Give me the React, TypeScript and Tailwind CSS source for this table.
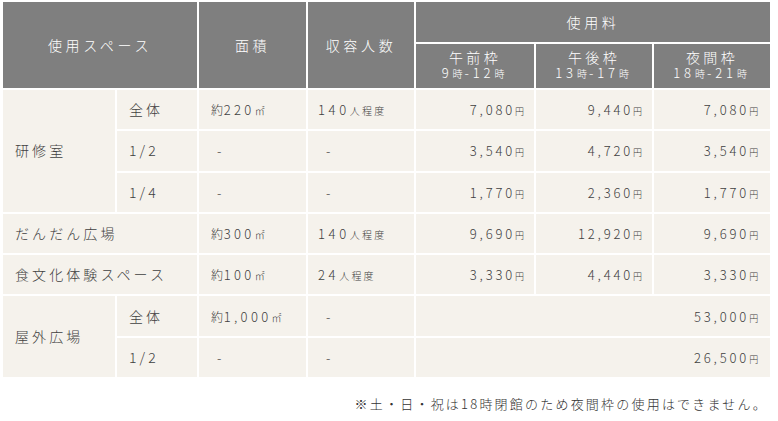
import React from "react";

const TH = "bg-[#7f7f7f] text-white font-light text-center align-middle";
const TD = "bg-[#f5f2ec] align-middle";

function Yen({ v }: { v: string }) {
  return (
    <span className="text-[13px] tracking-[0.22em]">
      {v}
      <span className="text-[9px] tracking-[0.1em]">円</span>
    </span>
  );
}

function Cap({ v }: { v: string }) {
  return (
    <span className="text-[13px] tracking-[0.28em]">
      {v}
      <span className="text-[10px] tracking-[0.22em]">人程度</span>
    </span>
  );
}

function Area({ v }: { v: string }) {
  return (
    <span className="text-[13px] tracking-[0.26em]">
      <span className="text-[12px] tracking-[0.05em]">約</span>
      {v}
      <span className="text-[10px]">㎡</span>
    </span>
  );
}

function Slot({ name, a, b }: { name: string; a: string; b: string }) {
  return (
    <div className="flex flex-col items-center pb-[2px]">
      <span className="block text-[14px] tracking-[0.24em] leading-[15px]">{name}</span>
      <span className="block text-[13px] tracking-[0.3em] leading-[15px]">
        {a}
        <span className="text-[10px] tracking-[0.2em]">時</span>-{b}
        <span className="text-[10px]">時</span>
      </span>
    </div>
  );
}

function Dash() {
  return <span className="pl-[6px] text-[13px]">-</span>;
}

export default function App() {
  const rowH = "h-[39.3px]";
  return (
    <div
      className="w-[778px] h-[421px] bg-white text-[#404040] pl-[1px] font-light"
      style={{ fontFamily: '"Noto Sans CJK JP", "Noto Sans", sans-serif' }}
    >
      <table className="table-fixed border-separate border-spacing-[2px] w-[771px] text-[14px] tracking-[0.22em]">
        <colgroup>
          <col className="w-[112px]" />
          <col className="w-[80px]" />
          <col className="w-[107px]" />
          <col className="w-[106px]" />
          <col className="w-[118px]" />
          <col className="w-[116px]" />
          <col className="w-[116px]" />
        </colgroup>
        <thead>
          <tr className="h-[40px]">
            <th rowSpan={2} colSpan={2} className={`${TH} tracking-[0.26em]`}>
              使用スペース
            </th>
            <th rowSpan={2} className={`${TH} tracking-[0.26em]`}>
              面積
            </th>
            <th rowSpan={2} className={`${TH} tracking-[0.26em]`}>
              収容人数
            </th>
            <th colSpan={3} className={`${TH} tracking-[0.26em]`}>
              使用料
            </th>
          </tr>
          <tr className="h-[44px]">
            <th className={TH}>
              <Slot name="午前枠" a="9" b="12" />
            </th>
            <th className={TH}>
              <Slot name="午後枠" a="13" b="17" />
            </th>
            <th className={TH}>
              <Slot name="夜間枠" a="18" b="21" />
            </th>
          </tr>
        </thead>
        <tbody>
          <tr className={rowH}>
            <td rowSpan={3} className={`${TD} pl-[12px]`}>
              研修室
            </td>
            <td className={`${TD} pl-[12px]`}>全体</td>
            <td className={`${TD} pl-[12px]`}>
              <Area v="220" />
            </td>
            <td className={`${TD} pl-[10px]`}>
              <Cap v="140" />
            </td>
            <td className={`${TD} text-right pr-[9px]`}>
              <Yen v="7,080" />
            </td>
            <td className={`${TD} text-right pr-[9px]`}>
              <Yen v="9,440" />
            </td>
            <td className={`${TD} text-right pr-[11px]`}>
              <Yen v="7,080" />
            </td>
          </tr>
          <tr className={rowH}>
            <td className={`${TD} pl-[12px]`}>1/2</td>
            <td className={`${TD} pl-[12px]`}>
              <Dash />
            </td>
            <td className={`${TD} pl-[12px]`}>
              <Dash />
            </td>
            <td className={`${TD} text-right pr-[9px]`}>
              <Yen v="3,540" />
            </td>
            <td className={`${TD} text-right pr-[9px]`}>
              <Yen v="4,720" />
            </td>
            <td className={`${TD} text-right pr-[11px]`}>
              <Yen v="3,540" />
            </td>
          </tr>
          <tr className={rowH}>
            <td className={`${TD} pl-[12px]`}>1/4</td>
            <td className={`${TD} pl-[12px]`}>
              <Dash />
            </td>
            <td className={`${TD} pl-[12px]`}>
              <Dash />
            </td>
            <td className={`${TD} text-right pr-[9px]`}>
              <Yen v="1,770" />
            </td>
            <td className={`${TD} text-right pr-[9px]`}>
              <Yen v="2,360" />
            </td>
            <td className={`${TD} text-right pr-[11px]`}>
              <Yen v="1,770" />
            </td>
          </tr>
          <tr className={rowH}>
            <td colSpan={2} className={`${TD} pl-[12px]`}>
              だんだん広場
            </td>
            <td className={`${TD} pl-[12px]`}>
              <Area v="300" />
            </td>
            <td className={`${TD} pl-[10px]`}>
              <Cap v="140" />
            </td>
            <td className={`${TD} text-right pr-[9px]`}>
              <Yen v="9,690" />
            </td>
            <td className={`${TD} text-right pr-[9px]`}>
              <Yen v="12,920" />
            </td>
            <td className={`${TD} text-right pr-[11px]`}>
              <Yen v="9,690" />
            </td>
          </tr>
          <tr className={rowH}>
            <td colSpan={2} className={`${TD} pl-[12px]`}>
              食文化体験スペース
            </td>
            <td className={`${TD} pl-[12px]`}>
              <Area v="100" />
            </td>
            <td className={`${TD} pl-[10px]`}>
              <Cap v="24" />
            </td>
            <td className={`${TD} text-right pr-[9px]`}>
              <Yen v="3,330" />
            </td>
            <td className={`${TD} text-right pr-[9px]`}>
              <Yen v="4,440" />
            </td>
            <td className={`${TD} text-right pr-[11px]`}>
              <Yen v="3,330" />
            </td>
          </tr>
          <tr className={rowH}>
            <td rowSpan={2} className={`${TD} pl-[12px]`}>
              屋外広場
            </td>
            <td className={`${TD} pl-[12px]`}>全体</td>
            <td className={`${TD} pl-[12px]`}>
              <Area v="1,000" />
            </td>
            <td className={`${TD} pl-[12px]`}>
              <Dash />
            </td>
            <td colSpan={3} className={`${TD} text-right pr-[11px]`}>
              <Yen v="53,000" />
            </td>
          </tr>
          <tr className={rowH}>
            <td className={`${TD} pl-[12px]`}>1/2</td>
            <td className={`${TD} pl-[12px]`}>
              <Dash />
            </td>
            <td className={`${TD} pl-[12px]`}>
              <Dash />
            </td>
            <td colSpan={3} className={`${TD} text-right pr-[11px]`}>
              <Yen v="26,500" />
            </td>
          </tr>
        </tbody>
      </table>
      <p className="mt-[15px] w-[771px] text-right pr-[4px] text-[13px] tracking-[0.17em] text-[#333]">
        ※土・日・祝は18時閉館のため夜間枠の使用はできません。
      </p>
    </div>
  );
}
